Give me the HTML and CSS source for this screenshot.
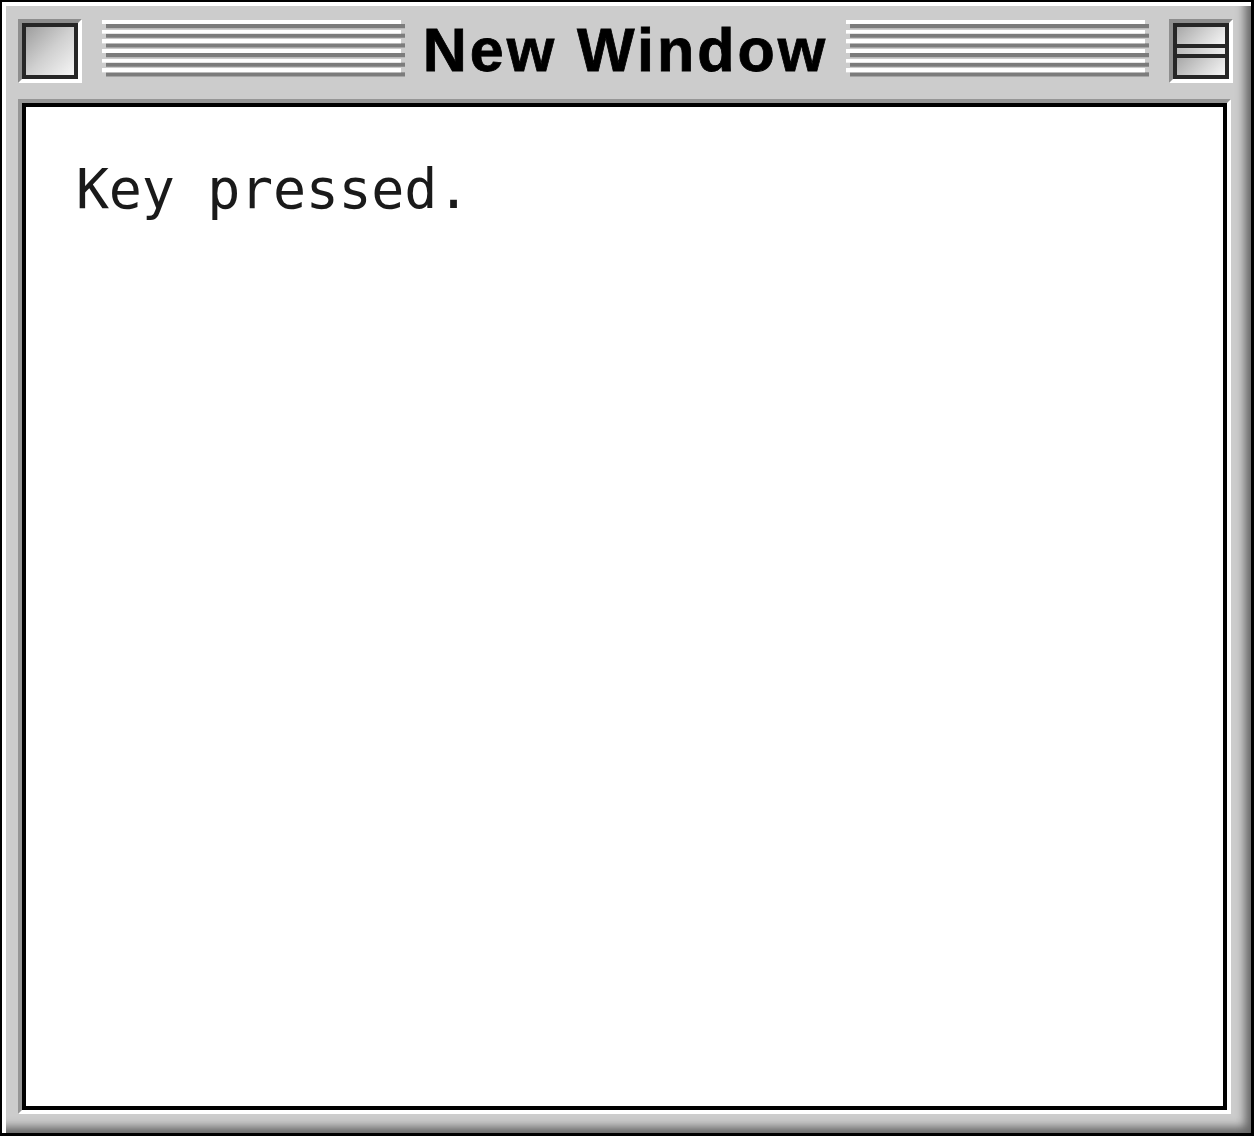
FILE: index.html
```html
<!DOCTYPE html>
<html lang="en">
<head>
<meta charset="utf-8">
<title>New Window</title>
<link rel="stylesheet" href="styles.css">
</head>
<body>
<div class="window">
  <div class="titlebar">
    <div class="ctrl-ring"><div class="closebox"></div></div>
    <div class="stripes stripes-left"></div>
    <div class="title">New Window</div>
    <div class="stripes stripes-right"></div>
    <div class="ctrl-ring">
      <div class="zoombox">
        <div class="pane"></div>
        <div class="mid"></div>
        <div class="pane"></div>
      </div>
    </div>
  </div>
  <div class="well">
    <div class="content">
      <p class="message">Key pressed.</p>
    </div>
  </div>
</div>
</body>
</html>
```
FILE: styles.css
```css
html, body {
  margin: 0;
  padding: 0;
  background: #cccccc;
}

.window {
  box-sizing: border-box;
  width: 1254px;
  height: 1136px;
  border: 2px solid #000;
  border-right-width: 3px;
  border-bottom-width: 3px;
  background: #cccccc;
  box-shadow: inset 4px 4px 0 #ffffff, inset -6px -6px 10px #666666;
  display: flex;
  flex-direction: column;
  filter: blur(0.6px);
}

.titlebar {
  height: 97px;
  flex: none;
  display: flex;
  align-items: center;
  padding: 0 18px 0 16px;
}

.ctrl-ring {
  flex: none;
  box-sizing: border-box;
  width: 64px;
  height: 64px;
  border: 4px solid;
  border-color: #8e8e8e #ffffff #ffffff #8e8e8e;
}

.closebox {
  box-sizing: border-box;
  width: 100%;
  height: 100%;
  border: 4px solid #262626;
  background: linear-gradient(135deg, #9e9e9e 0%, #d0d0d0 50%, #f6f6f6 100%);
}

.zoombox {
  box-sizing: border-box;
  width: 100%;
  height: 100%;
  border: 4px solid #262626;
  display: flex;
  flex-direction: column;
}

.zoombox .pane {
  height: 17px;
  background: linear-gradient(135deg, #a8a8a8 0%, #d4d4d4 55%, #f6f6f6 100%);
}

.zoombox .mid {
  height: 6px;
  border-top: 4px solid #262626;
  border-bottom: 4px solid #262626;
  background: linear-gradient(90deg, #bdbdbd, #ececec);
}

.stripes {
  flex: 1;
  align-self: flex-start;
  margin-top: 18px;
  height: 58px;
  background-image:
    repeating-linear-gradient(to bottom, #ffffff 0 3.5px, rgba(255,255,255,0) 4.5px 9.667px),
    repeating-linear-gradient(to bottom, rgba(128,128,128,0) 0 3.5px, #7c7c7c 4.5px 7.5px, rgba(128,128,128,0) 8.8px 9.667px);
  background-size: calc(100% - 4px) 100%, calc(100% - 4px) 100%;
  background-position: left top, right top;
  background-repeat: no-repeat;
}

.stripes-left {
  margin-left: 20px;
}

.stripes-right {
  margin-right: 20px;
}

.title {
  flex: none;
  width: 441px;
  text-align: center;
  font-family: "Liberation Sans", Arial, sans-serif;
  font-weight: bold;
  font-size: 61px;
  letter-spacing: 3px;
  line-height: 1;
  color: #000;
  -webkit-text-stroke: 0.8px #000;
}

.well {
  flex: 1;
  display: flex;
  margin: 0 20px 19px 16px;
  border: 4px solid;
  border-color: #969696 #ffffff #ffffff #969696;
}

.content {
  flex: 1;
  box-sizing: border-box;
  border: 4px solid #000;
  background: #ffffff;
  padding: 50px 47px 50px 50px;
}

.message {
  margin: 0;
  font-family: "DejaVu Sans Mono", "Liberation Mono", monospace;
  font-size: 55px;
  line-height: 64px;
  color: #1a1a1a;
  letter-spacing: -0.3px;
}
```
